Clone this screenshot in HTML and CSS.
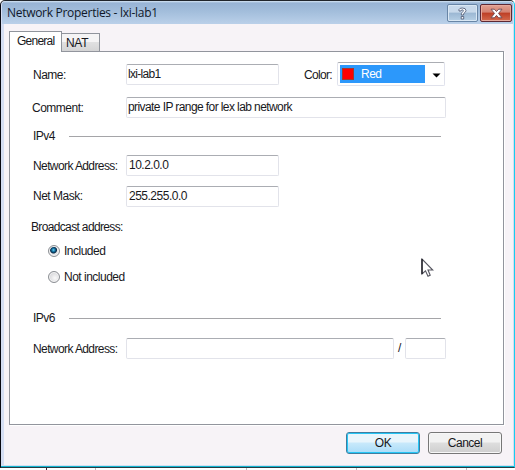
FILE: index.html
```html
<!DOCTYPE html>
<html lang="en">
<head>
<meta charset="utf-8">
<title>Network Properties - lxi-lab1</title>
<link rel="stylesheet" href="styles.css">
</head>
<body>
<div class="window">
  <header class="titlebar">
    <span class="title">Network Properties - lxi-lab1</span>
    <button class="caption help" aria-label="Help"><svg width="13" height="15" viewBox="0 0 13 15"><path d="M3 5V3.5Q3.5 2 6.3 2Q10 2 10 4.5Q10 6 8 7.2Q7.5 7.6 7.5 9H5.3Q5.2 7 6.2 6.3Q7.3 5.4 7.3 4.6Q7.3 3.8 6.2 3.8Q5.3 3.8 5 5ZM5.2 10.5H7.7V13H5.2Z" fill="#f7f9fc" stroke="#56617a" stroke-width=".9"/></svg></button>
    <button class="caption close" aria-label="Close"><svg width="13" height="11" viewBox="0 0 13 11"><path d="M1 1.2H4.3L6.5 3.5L8.7 1.2H12L8.5 5.4L12 9.8H8.7L6.5 7.4L4.3 9.8H1L4.5 5.4Z" fill="#fff" stroke="#6b4650" stroke-width=".9"/></svg></button>
  </header>
  <nav class="tabs">
    <span class="tab active">General</span>
    <span class="tab nat">NAT</span>
  </nav>
  <main class="panel">
    <div class="row name-row">
      <label class="label name">Name:</label>
      <div class="field medium"><span class="name-value">lxi-lab1</span></div>
      <label class="color-label">Color:</label>
      <div class="select">
        <div class="selected"><i class="swatch"></i><span>Red</span></div>
        <svg class="arrow" width="9" height="5" viewBox="0 0 9 5"><path d="M.5.5H8.5L4.5 4.5Z" fill="#000"/></svg>
      </div>
    </div>
    <div class="row comment-row">
      <label class="label comment">Comment:</label>
      <div class="field wide"><span class="comment-value">private IP range for lex lab network</span></div>
    </div>
    <div class="section v4"><span>IPv4</span><i class="rule"></i></div>
    <div class="row address-row">
      <label class="label address">Network Address:</label>
      <div class="field medium"><span class="ip-value">10.2.0.0</span></div>
    </div>
    <div class="row mask-row">
      <label class="label mask">Net Mask:</label>
      <div class="field medium"><span class="ip-value">255.255.0.0</span></div>
    </div>
    <div class="broadcast"><span>Broadcast address:</span></div>
    <div class="option included"><i class="radio checked"></i><span>Included</span></div>
    <div class="option excluded"><i class="radio"></i><span>Not included</span></div>
    <div class="section v6"><span>IPv6</span><i class="rule"></i></div>
    <div class="row v6-row">
      <label class="label address">Network Address:</label>
      <div class="field v6-address"></div>
      <span class="slash">/</span>
      <div class="field prefix"></div>
    </div>
  </main>
  <footer class="buttons">
    <button class="button ok">OK</button>
    <button class="button cancel">Cancel</button>
  </footer>
</div>
<div class="behind"><i></i><i></i><i></i><i></i><i></i></div>
<svg class="cursor" width="13" height="20" viewBox="0 0 13 20"><path d="M1 1V16L4.5 12.8L7 18.2L9.2 17.2L7 12H11.8Z" fill="#fff" stroke="#55555f" stroke-width="1.1"/><path d="M1 1V16" stroke="#15151c" stroke-width="1.3"/></svg>
</body>
</html>
```
FILE: styles.css
```css
* { box-sizing: border-box; }
body {
  margin: 0;
  width: 515px;
  height: 470px;
  overflow: hidden;
  background: #fff;
  font: 12px/16px "Liberation Sans", Arial, sans-serif;
  letter-spacing: -0.5px;
  color: #18181c;
  white-space: nowrap;
}
button { font: inherit; letter-spacing: inherit; color: inherit; padding: 0; margin: 0; }
.window {
  height: 468px;
  display: flex;
  flex-direction: column;
  background: #f7f3f7;
  border: 1px solid;
  border-color: #20252b #16cdf0 #263b44 #080810;
  border-radius: 5px 5px 0 0;
  box-shadow: inset 0 -1px #12b5d0, inset 3px 0 #d5def3, inset -1px -2px #d3dff1;
}
.titlebar {
  height: 23px;
  flex: none;
  display: flex;
  align-items: flex-start;
  padding: 3px 1px 0 7px;
  margin: 0 1px;
  background: linear-gradient(#d6e6f5 0, #98b4d5 2px, #a2bddb 10px, #bad0e9 100%);
  border-radius: 4px 4px 0 0;
}
.title { font: 12px/18px "Open Sans", "Noto Sans", sans-serif; letter-spacing: -0.29px; color: #10182a; margin-left: -2px; flex: 1; }
.caption { height: 18px; display: flex; align-items: center; justify-content: center; border-radius: 2px; }
.help { width: 31px; margin-right: 2px; border: 1px solid #6885a6; background: linear-gradient(#c8d9eb 45%, #9bb7d3 50%, #b6cfe5); box-shadow: inset 0 0 0 1px #d9e7f4; }
.close { width: 32px; border: 1px solid #5d2834; background: linear-gradient(#e2a091 0, #d48170 45%, #bd3e25 50%, #d46a4d); box-shadow: inset 0 0 0 1px #e7a99c; }
.tabs { display: flex; align-items: flex-end; height: 27px; flex: none; padding: 7px 0 0 8px; }
.tab { border: 1px solid #90949c; border-bottom: 0; }
.active { width: 53px; height: 21px; background: #fff; padding: 1px 0 0 7px; z-index: 1; margin-bottom: -1px; letter-spacing: -0.75px; }
.nat { width: 39px; height: 18px; margin-left: -1px; padding: 1px 0 0 4px; background: linear-gradient(#f5f4f5 45%, #e0e0e1 50%, #d4d4d5); letter-spacing: -0.3px; }
.panel { width: 495px; height: 374px; flex: none; margin-left: 8px; border: 1px solid #92959d; background: #fff; box-shadow: 1px 1px #fff; padding: 11px 0 0 22px; }
.row { display: flex; align-items: center; height: 22px; }
.label { width: 94px; flex: none; padding-left: 1px; }
.name, .comment { padding-top: 2px; }
.comment { padding-left: 0; }
.address { padding-top: 1px; letter-spacing: -0.6px; }
.field { height: 21px; flex: none; border: 1px solid #e2e3ea; border-top-color: #abadb3; border-radius: 2px; background: #fff; padding: 0 0 0 1px; line-height: 19px; }
.name-value { letter-spacing: -0.7px; }
.comment-value { letter-spacing: -0.59px; }
.ip-value { padding-left: 1px; }
.medium { width: 153px; }
.wide { width: 320px; }
.color-label { width: 33px; margin-left: 25px; letter-spacing: -0.7px; padding-top: 1px; }
.select { width: 108px; height: 24px; display: flex; align-items: center; border: 1px solid #e0e2ec; border-top-color: #abadb3; border-radius: 2px; padding-left: 2px; }
.selected { display: flex; align-items: center; width: 85px; height: 18px; background: #2c98fb; color: #fff; padding-left: 2px; }
.swatch { width: 12px; height: 12px; background: #f00; border: 1px solid #a2392e; margin-right: 7px; }
.arrow { margin: 2px 0 0 7px; }
.comment-row { margin-top: 11px; }
.section { display: flex; align-items: center; height: 16px; padding-left: 1px; }
.section span { width: 36px; }
.rule { width: 372px; height: 1px; background: #a5a5a8; }
.v4 { margin-top: 10px; }
.address-row { margin-top: 10px; }
.mask-row { margin-top: 9px; }
.broadcast { margin-top: 12px; margin-left: -1px; letter-spacing: -0.65px; }
.option { display: flex; align-items: center; height: 16px; padding-left: 16px; }
.included { margin-top: 8px; }
.excluded { margin-top: 10px; }
.radio { width: 12px; height: 12px; border: 1px solid #8c8f94; border-radius: 50%; background: radial-gradient(circle at 60% 60%, #fafafa, #c8c8cd); box-shadow: inset 0 0 0 1px #f5f5f5; margin-right: 4px; }
.checked { background: radial-gradient(circle at 45% 40%, #73cef0 0, #147bab 1.5px, #092947 3px, #e4e6e8 4px); }
.v6 { margin-top: 25px; }
.v6-row { margin-top: 11px; }
.v6-address { width: 268px; }
.slash { width: 11px; padding-left: 4px; }
.prefix { width: 41px; }
.buttons { display: flex; justify-content: flex-end; gap: 8px; margin: 7px 12px 0 0; }
.button { width: 74px; height: 22px; border-radius: 3px; line-height: 19px; }
.ok { border: 1px solid #3f7d9f; background: linear-gradient(#e8f5fc 45%, #c8e9fb 50%, #aadcf8); box-shadow: inset 0 0 0 1px #25c5f5; }
.cancel { border: 1px solid #777; background: linear-gradient(#f2f2f2 45%, #dedede 50%, #cfcfcf); box-shadow: inset 0 0 0 1px #f7f7f7; }
.behind { display: flex; height: 2px; }
.behind i { width: 1px; background: #b9bdc0; margin-left: 109px; }
.behind i:first-child { margin-left: 46px; background: #3b2134; }
.behind i:nth-child(2) { margin-left: 48px; }
.behind i:nth-child(3) { margin-left: 150px; }
.cursor { position: absolute; left: 421px; top: 258px; }
```
